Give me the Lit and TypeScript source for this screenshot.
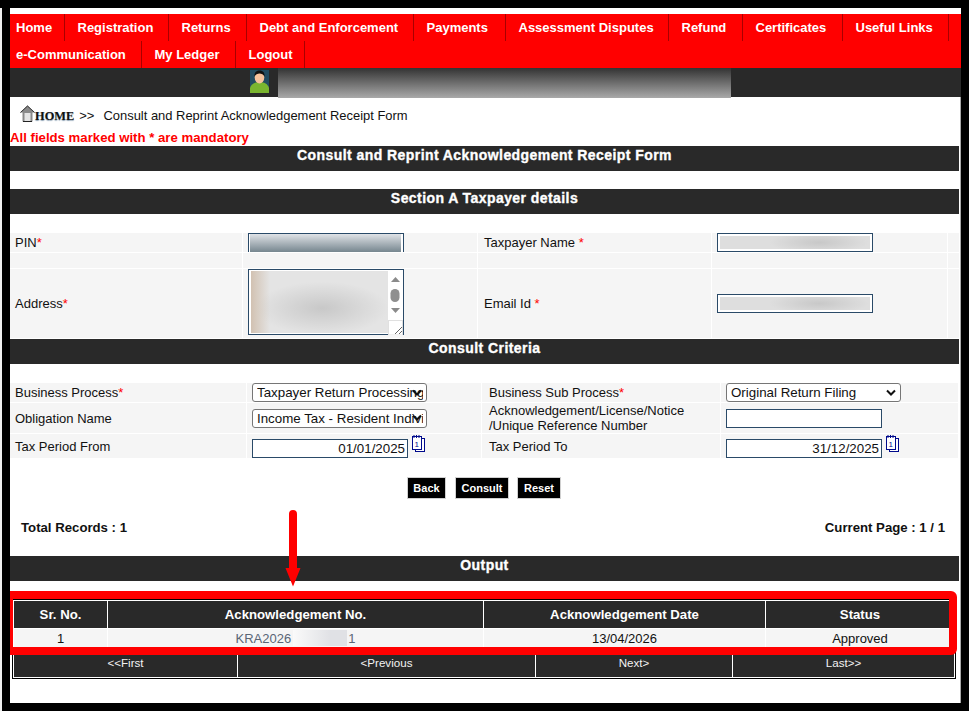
import { LitElement, html, css, svg } from "lit";
import { customElement } from "lit/decorators.js";

const NAV1: [string, number][] = [
  ["Home", 55], ["Registration", 104], ["Returns", 78], ["Debt and Enforcement", 167],
  ["Payments", 92], ["Assessment Disputes", 163], ["Refund", 74], ["Certificates", 100], ["Useful Links", 106],
];
const NAV2: [string, number][] = [["e-Communication", 132], ["My Ledger", 94], ["Logout", 69]];

const calendar = () => svg`<svg class="cal" viewBox="0 0 13 17" width="13" height="17">
  <rect x="3.5" y="3.5" width="9" height="13" fill="#fff" stroke="#000a8c"/>
  <rect x="0.5" y="1.5" width="9" height="13" fill="#fff" stroke="#000a8c"/>
  <path d="M2 0v3M4.5 0v3M7 0v3" stroke="#000a8c"/>
  <text x="2.6" y="11.5" font-size="8" font-family="Liberation Sans" fill="#000a8c">1</text>
</svg>`;

@customElement("app-root")
export class AppRoot extends LitElement {
  static styles = css`
    :host { display: flex; width: 969px; height: 711px; background: #000; font-family: "Liberation Sans", Arial, sans-serif; font-size: 13px; color: #111; overflow: hidden; }
    .strip { width: 2px; margin-top: 8px; background: #f0f0f0; flex: none; }
    .content { width: 951px; height: 695px; margin: 8px 0 0 8px; background: #fff; display: flex; flex-direction: column; padding-top: 6px; box-sizing: border-box; }
    .nav { background: #f00; height: 54px; flex: none; }
    .nav-row { display: flex; height: 27px; }
    .nav-item { box-sizing: border-box; height: 27px; line-height: 27px; padding-left: 12.5px; color: #fff; font-weight: bold; font-size: 13px; border-right: 1px solid #a80000; white-space: nowrap; }
    .nav-row .nav-item:first-child { padding-left: 6px; }
    .topbar { background: #292929; height: 29px; flex: none; display: flex; align-items: flex-start; padding-left: 240px; }
    .avatar { margin-top: 2px; flex: none; }
    .banner { margin-left: 9px; width: 453px; height: 30px; flex: none; background: linear-gradient(#333, #a9a9a9); }
    .main { flex: 1; border-right: 1px solid #a8a8a8; padding-right: 1px; display: flex; flex-direction: column; box-sizing: border-box; min-height: 0; }
    .crumb { height: 33px; flex: none; display: flex; align-items: flex-start; padding: 8px 0 0 10px; box-sizing: border-box; }
    .crumb svg { flex: none; }
    .home { font-family: "Liberation Serif", serif; font-weight: bold; font-size: 12.4px; line-height: 14px; margin-top: 4px; color: #111; text-shadow: 0 1px 1px #8fa3b5; }
    .sep { margin: 3px 9px 0 5px; font-size: 13px; line-height: 15px; }
    .crumb-title { margin-top: 3px; font-size: 12.95px; line-height: 15px; }
    .mand { height: 16px; flex: none; line-height: 15px; color: #f00; font-weight: bold; font-size: 13.2px; white-space: nowrap; }
    .bar { height: 25px; flex: none; background: #292929; color: #fff; font-weight: bold; text-align: center; font-size: 14px; line-height: 19px; -webkit-text-stroke: 0.35px #fff; letter-spacing: 0.43px; }
    .b2 { margin-top: 18px; }
    .tax { margin-top: 19px; flex: none; display: grid; grid-template-columns: 232px 234px 233px 235px 11px; grid-template-rows: 19px 15px 69px; gap: 1px; margin-bottom: 1px; }
    .cell { background: #f5f5f5; display: flex; align-items: center; padding-left: 5px; box-sizing: border-box; min-width: 0; }
    .cell b { color: #f00; font-weight: normal; }
    .tax .sp { padding-left: 6px; }
    .tax .ctl { padding-left: 5px; }
    .tax .ta { align-items: flex-start; }
    .field { box-sizing: border-box; width: 156px; height: 19px; border: 1px solid #2a4a68; background: #fff; padding: 0; margin: 0; border-radius: 0; outline: none; font: 13.33px "Liberation Sans", Arial, sans-serif; display: block; }
    .blur-pin { background: linear-gradient(#e0e3e7, #76868f) 1px 0 / 151px 100% no-repeat #fff; border-bottom: 0; }
    .blur-lt { background: radial-gradient(ellipse 55px 12px at 66% 50%, #c8c8c8, #dedede 90%) 2px 2px / 150px 13px no-repeat #fff; }
    .area { box-sizing: border-box; width: 156px; height: 66px; border: 1px solid #2a4a68; background: #fff; display: flex; padding: 1px 0 1px 2px; }
    .area-blur { flex: 1; height: 62px; background: linear-gradient(90deg, rgba(205,185,165,.8), rgba(205,185,165,0) 14%), radial-gradient(ellipse 70px 28px at 52% 60%, #c8c8c8, #e4e4e4 95%); }
    .area svg { flex: none; }
    .crit { margin-top: 19px; flex: none; display: grid; grid-template-columns: 236px 234px 238px 237px; grid-template-rows: 19px 30px 24px; gap: 1px; }
    .crit .lbl2 { padding-left: 7px; line-height: 15px; }
    .crit .top-lbl { align-items: flex-start; padding-top: 5px; }
    select {
      appearance: none; -webkit-appearance: none; box-sizing: border-box; width: 175px; height: 19px;
      font: 13.33px "Liberation Sans", Arial, sans-serif; color: #111; border: 1px solid #767676; border-radius: 3px;
      padding: 0 3px 0 4px; margin: 0; background-color: #fff;
      background-image: url("data:image/svg+xml,%3Csvg xmlns='http://www.w3.org/2000/svg' width='12' height='8'%3E%3Cpath d='M2 1.500l4 4 4-4' fill='none' stroke='%23111' stroke-width='2'/%3E%3C/svg%3E");
      background-repeat: no-repeat; background-position: right 3px center;
    }
    .date { display: flex; height: 100%; gap: 4px; align-items: flex-start; }
    .date .field { text-align: right; padding-right: 2px; margin-top: 5px; color: #111; }
    .cal { margin-top: 1px; flex: none; }
    .btns { flex: none; margin-top: 19px; display: flex; justify-content: center; height: 22px; padding-right: 1px; }
    .btn { box-sizing: border-box; height: 22px; background: #000; color: #fff; border: 1px solid #d0d0d0; font: bold 11px "Liberation Sans", Arial, sans-serif; padding: 0; margin: 0; }
    .w1 { width: 39px; margin-right: 9px; }
    .w2 { width: 54px; margin-right: 8px; }
    .w3 { width: 44px; }
    .rec { flex: none; height: 57px; display: flex; justify-content: space-between; align-items: center; padding: 0 14px 0 11px; font-weight: bold; font-size: 13.2px; }
    .out-wrap { flex: none; position: relative; margin-top: 18px; }
    .tbl { margin-left: 2px; width: 944px; box-sizing: border-box; border: 1px solid #000; padding: 1px; background: #fff; display: flex; flex-direction: column; gap: 1px; }
    .tr { display: grid; gap: 1px; }
    .t-cols { grid-template-columns: 93px 375px 281px 188px; }
    .p-cols { grid-template-columns: 223px 297px 196px 221px; }
    .th { height: 27px; background: #292929; color: #fff; font-weight: bold; font-size: 13.2px; display: flex; align-items: center; justify-content: center; }
    .td { height: 18px; background: #f5f5f5; font-size: 13px; display: flex; align-items: center; justify-content: center; }
    .link { color: #5a6675; display: flex; align-items: center; }
    .mask { display: inline-block; width: 54px; height: 16px; margin: 0 1px 0 2px; background: linear-gradient(90deg, #fafafa, #e0e1e5 70%); }
    .pg { height: 29px; background: #292929; color: #f2f2f2; font-size: 11.6px; display: flex; align-items: center; justify-content: center; }
    .redbox { position: absolute; left: 0; top: -8px; width: 947px; height: 64px; box-sizing: border-box; border: solid #f00; border-width: 8px 8px 8px 3px; border-radius: 0 6px 6px 0; pointer-events: none; }
    .arrow { position: absolute; left: 275px; top: -89px; }
  `;

  render() {
    const nav = (items: [string, number][]) => html`<div class="nav-row">${items.map(([t, w]) => html`<div class="nav-item" style="width:${w}px">${t}</div>`)}</div>`;
    return html`
      <div class="strip"></div>
      <div class="content">
        <div class="nav">${nav(NAV1)}${nav(NAV2)}</div>
        <div class="topbar">
          <svg class="avatar" width="19" height="23" viewBox="0 0 19 23">
            <rect width="19" height="23" fill="#234b60"/>
            <path d="M0 23v-5c1-4 5-6 9.500-6s8.500 2 9.500 6v5z" fill="#7ab52f"/>
            <ellipse cx="9.500" cy="7.500" rx="4.800" ry="6" fill="#f6c29c"/>
            <path d="M4.500 6.500C4 2 7 .5 9.500 .5S15 2 14.500 6.500c-1-2-3-3-5-3s-4 1-5 3z" fill="#111"/>
          </svg>
          <div class="banner"></div>
        </div>
        <div class="main">
          <div class="crumb">
            <svg width="15" height="17" viewBox="0 0 15 17">
              <path d="M7.500 0.500 L0 7.500 H2.500 V16.500 H12.500 V7.500 H15 Z" fill="#8a8a8a"/>
              <path d="M4.500 8H10.500V16.500H4.500z" fill="#e4e4e4"/>
              <path d="M0.500 7.500L7.500 1 14.500 7.500" fill="none" stroke="#333" stroke-width="1"/>
              <path d="M3 16.500h9" stroke="#222"/>
            </svg>
            <span class="home">HOME</span>
            <span class="sep">&gt;&gt;</span>
            <span class="crumb-title">Consult and Reprint Acknowledgement Receipt Form</span>
          </div>
          <div class="mand">All fields marked with * are mandatory</div>
          <div class="bar">Consult and Reprint Acknowledgement Receipt Form</div>
          <div class="bar b2">Section A Taxpayer details</div>
          <div class="tax">
            <div class="cell">PIN<b>*</b></div>
            <div class="cell ctl"><input class="field blur-pin" readonly aria-label="PIN" /></div>
            <div class="cell sp">Taxpayer Name&nbsp;<b>*</b></div>
            <div class="cell ctl"><input class="field blur-lt" readonly aria-label="Taxpayer Name" /></div>
            <div class="cell"></div>
            <div class="cell"></div><div class="cell"></div><div class="cell"></div><div class="cell"></div><div class="cell"></div>
            <div class="cell">Address<b>*</b></div>
            <div class="cell ctl ta">
              <div class="area">
                <div class="area-blur"></div>
                <svg width="15" height="64" viewBox="0 0 15 64">
                  <rect width="15" height="64" fill="#fff"/>
                  <path d="M3 11L7.500 6 12 11z" fill="#8a8a8a"/>
                  <rect x="2.500" y="18" width="9" height="13" rx="4.500" fill="#8f8f8f"/>
                  <path d="M3 37L7.500 42 12 37z" fill="#8a8a8a"/>
                  <rect x="0.500" y="49.500" width="14" height="14.500" fill="#fff" stroke="#e0e0e0"/>
                  <path d="M7 63L14 56M11 63L14 60" stroke="#666"/>
                </svg>
              </div>
            </div>
            <div class="cell sp">Email Id&nbsp;<b>*</b></div>
            <div class="cell ctl"><input class="field blur-lt" readonly aria-label="Email Id" /></div>
            <div class="cell"></div>
          </div>
          <div class="bar">Consult Criteria</div>
          <div class="crit">
            <div class="cell">Business Process<b>*</b></div>
            <div class="cell"><select aria-label="Business Process"><option>Taxpayer Return Processing</option></select></div>
            <div class="cell lbl2">Business Sub Process<b>*</b></div>
            <div class="cell"><select aria-label="Business Sub Process"><option>Original Return Filing</option></select></div>
            <div class="cell">Obligation Name</div>
            <div class="cell"><select aria-label="Obligation Name"><option>Income Tax - Resident Individual</option></select></div>
            <div class="cell lbl2">Acknowledgement/License/Notice<br />/Unique Reference Number</div>
            <div class="cell"><input class="field" aria-label="Reference Number" /></div>
            <div class="cell top-lbl">Tax Period From</div>
            <div class="cell"><div class="date"><input class="field" .value=${"01/01/2025"} aria-label="Tax Period From" />${calendar()}</div></div>
            <div class="cell lbl2 top-lbl">Tax Period To</div>
            <div class="cell"><div class="date"><input class="field" .value=${"31/12/2025"} aria-label="Tax Period To" />${calendar()}</div></div>
          </div>
          <div class="btns">
            <button class="btn w1">Back</button>
            <button class="btn w2">Consult</button>
            <button class="btn w3">Reset</button>
          </div>
          <div class="rec"><span>Total Records : 1</span><span>Current Page : 1 / 1</span></div>
          <div class="bar">Output</div>
          <div class="out-wrap">
            <div class="tbl">
              <div class="tr t-cols">
                <div class="th">Sr. No.</div><div class="th">Acknowledgement No.</div><div class="th">Acknowledgement Date</div><div class="th">Status</div>
              </div>
              <div class="tr t-cols">
                <div class="td">1</div>
                <div class="td"><span class="link">KRA2026<span class="mask"></span>1</span></div>
                <div class="td">13/04/2026</div>
                <div class="td">Approved</div>
              </div>
              <div class="tr p-cols">
                <div class="pg">&lt;&lt;First</div><div class="pg">&lt;Previous</div><div class="pg">Next&gt;</div><div class="pg">Last&gt;&gt;</div>
              </div>
            </div>
            <div class="redbox"></div>
            <svg class="arrow" width="16" height="77" viewBox="0 0 16 77">
              <path d="M4 4a4 4 0 0 1 8 0V58H15.500L8 76.500 .5 58H4z" fill="#f00"/>
            </svg>
          </div>
        </div>
      </div>
    `;
  }
}
